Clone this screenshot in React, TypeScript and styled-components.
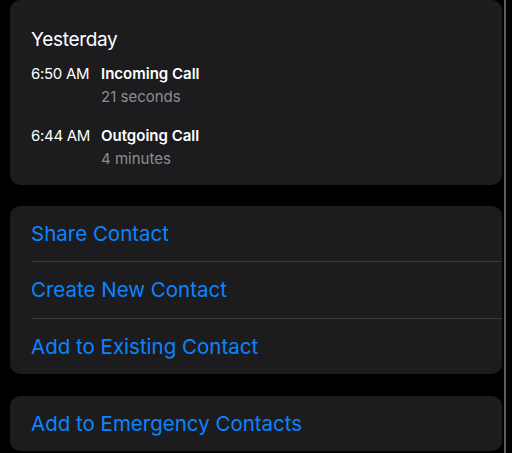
import React from "react";
import styled, { createGlobalStyle } from "styled-components";

const Global = createGlobalStyle`
  html, body { margin: 0; padding: 0; background: #000; }
  body { font-family: Inter, "Noto Sans", "Liberation Sans", sans-serif; -webkit-font-smoothing: antialiased; }
`;

const Page = styled.div`
  display: flex;
  width: 512px;
  height: 453px;
  overflow: hidden;
  background: #000;
`;

const Column = styled.div`
  flex: 1;
  display: flex;
  flex-direction: column;
  gap: 21px;
  padding-left: 10px;
`;

const ScrollLine = styled.div`
  width: 2px;
  margin: 0 6px 0 2px;
  background: #5c5c5e;
`;

const Card = styled.div<{ $pad?: boolean }>`
  background: #1c1c1e;
  border-radius: 10px;
  padding: ${(p) => (p.$pad ? "28px 21px 15px" : "0 0 0 21px")};
  display: flex;
  flex-direction: column;
`;

const SoloCard = styled(Card)`
  margin-top: 1px;
`;

const Title = styled.div`
  color: #fff;
  font-size: 19px;
  letter-spacing: -0.3px;
  line-height: 24px;
  margin-bottom: 9.5px;
`;

const Entry = styled.div`
  display: grid;
  grid-template-columns: 70px 1fr;
  & + & { margin-top: 16px; }
`;

const Time = styled.div`
  color: #fff;
  font-size: 15px;
  letter-spacing: -0.3px;
  line-height: 23px;
`;

const Kind = styled.div`
  color: #fff;
  font-size: 15px;
  font-weight: 600;
  line-height: 23px;
`;

const Duration = styled.div`
  color: #8d8d93;
  font-size: 15px;
  line-height: 23px;
`;

const Action = styled.div<{ $h: number }>`
  height: ${(p) => p.$h}px;
  display: flex;
  align-items: center;
  color: #0a84ff;
  font-size: 20.5px;
  & + & { border-top: 1px solid #38383a; }
`;

const calls = [
  { time: "6:50 AM", kind: "Incoming Call", dur: "21 seconds" },
  { time: "6:44 AM", kind: "Outgoing Call", dur: "4 minutes" },
];

export default function App() {
  return (
    <Page>
      <Global />
      <Column>
        <Card $pad>
          <Title>Yesterday</Title>
          {calls.map((c) => (
            <Entry key={c.time}>
              <Time>{c.time}</Time>
              <div>
                <Kind>{c.kind}</Kind>
                <Duration>{c.dur}</Duration>
              </div>
            </Entry>
          ))}
        </Card>
        <Card>
          <Action $h={55}>Share Contact</Action>
          <Action $h={56}>Create New Contact</Action>
          <Action $h={55}>Add to Existing Contact</Action>
        </Card>
        <SoloCard>
          <Action $h={55}>Add to Emergency Contacts</Action>
        </SoloCard>
      </Column>
      <ScrollLine />
    </Page>
  );
}
